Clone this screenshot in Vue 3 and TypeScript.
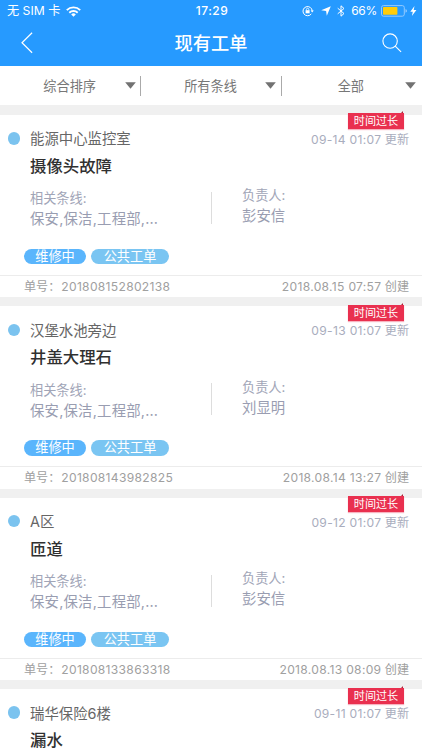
<script setup lang="ts">
interface Detail {
  owner: string
  no: string
  created: string
}

interface Order {
  place: string
  title: string
  updated: string
  detail?: Detail
}

const filters: string[] = ['综合排序', '所有条线', '全部']

const orders: Order[] = [
  { place: '能源中心监控室', title: '摄像头故障', updated: '09-14 01:07', detail: { owner: '彭安信', no: '201808152802138', created: '2018.08.15 07:57' } },
  { place: '汉堡水池旁边', title: '井盖大理石', updated: '09-13 01:07', detail: { owner: '刘显明', no: '201808143982825', created: '2018.08.14 13:27' } },
  { place: 'A区', title: '匝道', updated: '09-12 01:07', detail: { owner: '彭安信', no: '201808133863318', created: '2018.08.13 08:09' } },
  { place: '瑞华保险6楼', title: '漏水', updated: '09-11 01:07' },
]
</script>

<template>
  <div class="screen">
    <header class="header">
      <div class="status">
        <div class="side">
          <span class="carrier">无 SIM 卡</span>
          <svg class="wifi" width="15" height="11" viewBox="0 0 15 11">
            <g fill="none" stroke="#fff" stroke-width="1.9">
              <path d="M.8 4.1a9.6 9.6 0 0 1 13.4 0" />
              <path d="M3.3 6.7a6 6 0 0 1 8.4 0" />
            </g>
            <path d="M7.5 10.8 5.2 8.4a3.3 3.3 0 0 1 4.6 0z" fill="#fff" />
          </svg>
        </div>
        <span class="clock">17:29</span>
        <div class="side right">
          <svg width="12" height="12" viewBox="0 0 12 12" fill="none" stroke="#fff">
            <path d="M9.3 8.9a4.6 4.6 0 1 1 .9-2.9" stroke-width="1" />
            <path d="M8.6 5.4h3.2L10.2 7.6z" fill="#fff" stroke="none" />
            <rect x="3.6" y="5.2" width="4" height="3.1" fill="#fff" stroke="none" />
            <path d="M4.4 5.4V4.5a1.2 1.2 0 0 1 2.4 0v.9" stroke-width=".8" />
          </svg>
          <svg class="loc" width="10" height="10" viewBox="0 0 10 10"><path d="M9.8.2 5.8 9.8 5.1 5 .2 4.3z" fill="#fff" /></svg>
          <svg class="bt" width="8" height="12" viewBox="0 0 8 12"><path d="M.7 3.2 7 8.5 4 11.2V.8L7 3.5.7 8.8" fill="none" stroke="#fff" stroke-width="1" /></svg>
          <span class="percent">66%</span>
          <svg class="battery" width="27" height="12" viewBox="0 0 27 12">
            <rect x=".5" y=".6" width="22.8" height="10.6" rx="2" fill="none" stroke="#93caff" />
            <rect x="2" y="2.1" width="14.4" height="7.6" rx=".6" fill="#ffcc08" />
            <path d="M24.5 4.1q1.5.5 1.5 1.8t-1.5 1.8z" fill="#93caff" />
          </svg>
          <svg class="bolt" width="7" height="10" viewBox="0 0 7 10"><path d="M4.5 0 .3 5.7h2.5L1.9 10l4.5-6H3.7z" fill="#fff" /></svg>
        </div>
      </div>
      <nav class="nav">
        <svg class="back" width="12" height="22" viewBox="0 0 12 22"><path d="M11.1.8 1 10.8l10.1 10" fill="none" stroke="#fff" stroke-width="1.2" /></svg>
        <h1>现有工单</h1>
        <svg class="search" width="20" height="20" viewBox="0 0 20 20" fill="none" stroke="#fff" stroke-width="1.1">
          <circle cx="8.1" cy="8.1" r="7.2" />
          <path d="m13.2 13.2 5.9 5.6" />
        </svg>
      </nav>
    </header>

    <div class="filters">
      <div v-for="f in filters" :key="f" class="filter">
        <span class="filter-text">{{ f }}</span>
        <svg class="caret" width="11" height="7" viewBox="0 0 11 7"><path d="M.2.2h10.6L5.5 6.8z" fill="#727272" /></svg>
      </div>
    </div>

    <main class="list">
      <article v-for="o in orders" :key="o.updated" class="card">
        <div class="ribbon">时间过长</div>
        <div class="top">
          <i class="dot"></i>
          <span class="place">{{ o.place }}</span>
          <span class="updated"><span class="date">{{ o.updated }}</span> 更新</span>
        </div>
        <h2>{{ o.title }}</h2>
        <template v-if="o.detail">
          <div class="info">
            <div class="lines">
              <div class="label">相关条线:</div>
              <div class="value wide">保安,保洁,工程部,...</div>
            </div>
            <div class="owner">
              <div class="label">负责人:</div>
              <div class="value">{{ o.detail.owner }}</div>
            </div>
          </div>
          <div class="tags">
            <span class="tag state">维修中</span>
            <span class="tag kind">公共工单</span>
          </div>
          <footer class="foot">
            <span>单号：<span class="num no">{{ o.detail.no }}</span></span>
            <span><span class="num">{{ o.detail.created }}</span> 创建</span>
          </footer>
        </template>
      </article>
    </main>
  </div>
</template>

<style>
body {
  overflow: hidden;
}
</style>

<style scoped>
.screen {
  display: flex;
  flex-direction: column;
  width: 422px;
  height: 750px;
  overflow: hidden;
  background: #f0f0f0;
  font-family: Inter, "Noto Sans CJK SC", sans-serif;
}
.header {
  flex: none;
  height: 65.6px;
  background: #269aff;
  color: #fff;
}
.status {
  display: flex;
  align-items: center;
  height: 22px;
  padding: 0 5px 0 7px;
  font-size: 12.2px;
  line-height: 22px;
}
.side {
  flex: 1;
  display: flex;
  align-items: center;
}
.right {
  justify-content: flex-end;
}
.wifi {
  margin-left: 6px;
}
.clock {
  font-weight: 500;
  font-size: 12px;
  letter-spacing: 0.5px;
}
.loc {
  margin-left: 7px;
}
.bt {
  margin-left: 6px;
}
.percent {
  margin-left: 6px;
  font-size: 12px;
  letter-spacing: -0.3px;
}
.battery {
  margin-left: 4px;
}
.bolt {
  margin-left: 2px;
}
.nav {
  display: flex;
  align-items: center;
  justify-content: space-between;
  height: 42px;
  padding: 0 20px 0 21px;
}
h1 {
  margin: 0;
  padding-left: 7px;
  font-size: 18.2px;
  font-weight: 500;
  line-height: 42px;
}
.filters {
  flex: none;
  display: flex;
  height: 39.4px;
  background: #fff;
  color: #777;
}
.filter {
  display: flex;
  align-items: center;
  box-sizing: border-box;
  width: 140.3px;
  padding-right: 5.5px;
  font-size: 13.2px;
  background: linear-gradient(#aaa, #aaa) right 0 top 10px / 1px 20px no-repeat;
}
.filter:first-child {
  width: 141.4px;
}
.filter:last-child {
  background: none;
}
.filter-text {
  flex: 1;
  text-align: center;
  padding-left: 14.5px;
}
.list {
  flex: 1;
  display: flex;
  flex-direction: column;
  gap: 9px;
  padding-top: 10px;
}
.card {
  flex: none;
  position: relative;
  height: 182.4px;
  background: #fff;
}
.card:last-child {
  flex: 1;
  height: auto;
}
.ribbon {
  position: absolute;
  top: -1.6px;
  left: 348px;
  width: 56px;
  height: 16px;
  background: #e9304f;
  box-shadow: 0 1px 1px #f7b4c0;
  color: #fff;
  font-size: 11.1px;
  line-height: 16px;
  text-align: center;
}
.ribbon::after {
  content: "";
  position: absolute;
  top: -2px;
  right: 1px;
  border-left: 2px solid transparent;
  border-bottom: 2px solid #a72337;
}
.top {
  display: flex;
  align-items: center;
  height: 24px;
  padding: 11px 13px 0 8px;
}
.dot {
  width: 12.4px;
  height: 12.4px;
  margin: 1px 9.6px 0 0;
  border-radius: 50%;
  background: #7bc3ef;
}
.place {
  flex: 1;
  color: #666;
  font-size: 14.4px;
}
.updated {
  padding-top: 1px;
  color: #a9adbd;
  font-size: 12.1px;
}
.date {
  letter-spacing: 0.3px;
}
h2 {
  height: 30px;
  margin: 0;
  padding-left: 30px;
  color: #303030;
  font-size: 16.4px;
  font-weight: 500;
  line-height: 33.4px;
}
.info {
  display: flex;
  height: 66px;
}
.lines {
  box-sizing: border-box;
  width: 212px;
  padding: 9.4px 0 0 30px;
  background: linear-gradient(#ddd, #ddd) right 0 top 12px / 1px 32px no-repeat;
}
.owner {
  padding: 6.4px 0 0 30px;
}
.label {
  color: #a1a5b7;
  font-size: 13.2px;
  line-height: 19px;
}
.value {
  color: #999db1;
  font-size: 14.4px;
  line-height: 21px;
}
.wide {
  letter-spacing: 0.2px;
}
.tags {
  display: flex;
  gap: 5px;
  height: 29px;
  padding-left: 24px;
  padding-top: 3px;
  box-sizing: border-box;
}
.tag {
  width: 62px;
  height: 15.4px;
  border-radius: 8px;
  color: #fff;
  font-size: 13.2px;
  line-height: 15.4px;
  text-align: center;
}
.state {
  background: #5ab5fc;
}
.kind {
  width: 78px;
  background: #7ac5f2;
}
.foot {
  display: flex;
  justify-content: space-between;
  height: 21.4px;
  padding: 0 13px 0 24px;
  border-top: 1px solid #ececec;
  color: #a0a0a0;
  font-size: 12.1px;
  line-height: 21px;
}
.num {
  letter-spacing: 0.3px;
}
.no {
  margin-left: 1px;
}
</style>
